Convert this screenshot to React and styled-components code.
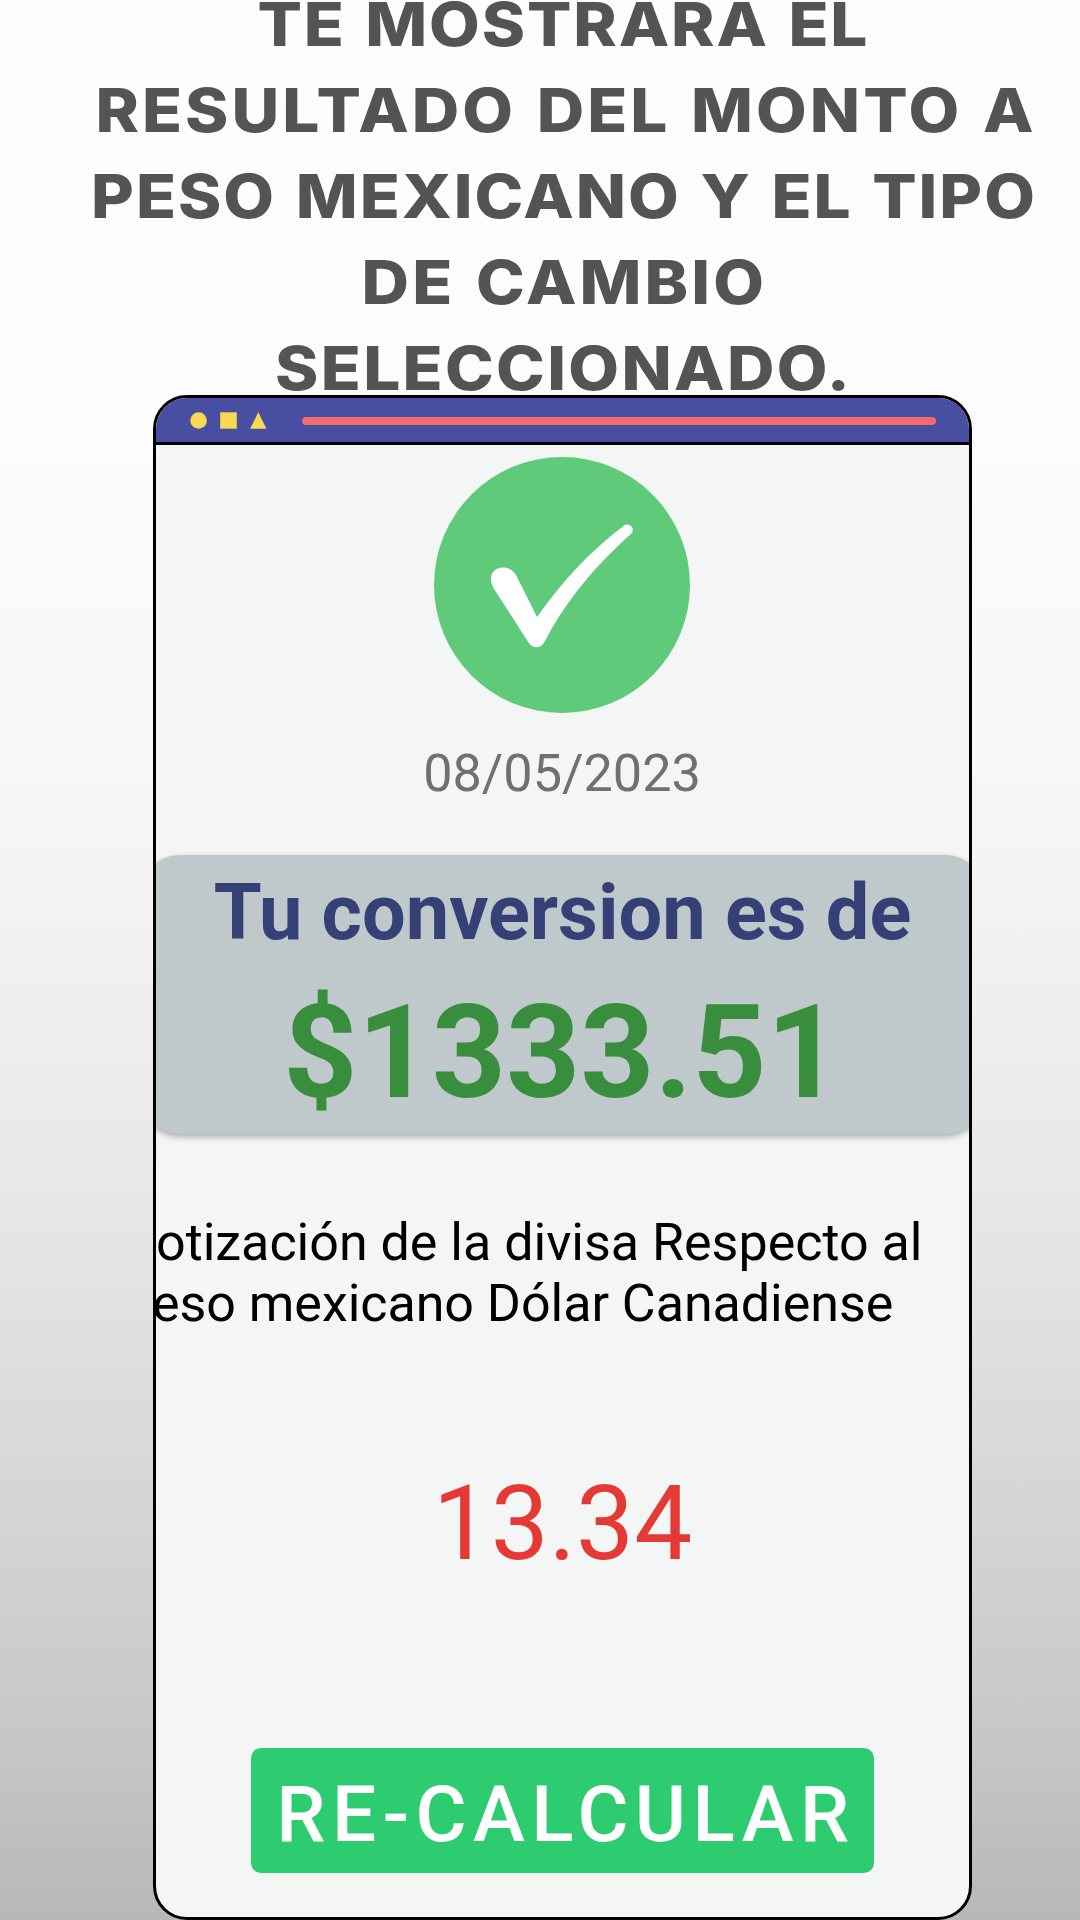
import React from "react";
import styled, { createGlobalStyle } from "styled-components";

const GlobalStyle = createGlobalStyle`
  * { box-sizing: border-box; }
  html, body { margin: 0; padding: 0; }
  body { font-family: Roboto, "Liberation Sans", sans-serif; }
`;

const Page = styled.main`
  width: 1080px;
  height: 1920px;
  overflow: hidden;
  display: flex;
  flex-direction: column;
  align-items: center;
  padding-left: 45px;
  background: linear-gradient(180deg, #fdfdfd 0%, #fcfcfc 22%, #f8f8f8 38%, #f4f4f4 45%, #eaeaea 59%, #e6e6e6 64%, #dfdfdf 70%, #c9c9c9 89%, #b8b8b8 100%);
`;

const Heading = styled.h1`
  margin: 0;
  height: 395px;
  flex: none;
  display: flex;
  flex-direction: column;
  align-items: center;
  gap: 38px;
  font: 800 60px/48px Inter, "Open Sans", sans-serif;
  color: #545454;
`;

const HeadingLine = styled.span`
  display: block;
  height: 48px;
  white-space: nowrap;
  padding-left: ${(p) => p.$inset}px;
  letter-spacing: ${(p) => p.$track}px;
  word-spacing: 3px;
  transform: scaleX(1.095);
`;

const Window = styled.section`
  flex: none;
  width: 819px;
  height: 1525px;
  border: 3px solid #000;
  border-radius: 34px;
  background: #f4f6f5;
  overflow: hidden;
  display: flex;
  flex-direction: column;
`;

const TitleBar = styled.header`
  flex: none;
  height: 47px;
  padding: 1px 33px 0 34px;
  display: flex;
  align-items: center;
  background: #484ea1;
  border-bottom: 3px solid #000;
`;

const Shapes = styled.svg`
  width: 77px;
  height: 17px;
  margin-right: 35px;
  fill: #f8da52;
`;

const AddressLine = styled.div`
  flex: 1;
  height: 8px;
  border-radius: 4px;
  background: #f26c6e;
`;

const Body = styled.div`
  flex: 1;
  display: flex;
  flex-direction: column;
  align-items: center;
`;

const CheckBadge = styled.svg`
  flex: none;
  width: 256px;
  height: 256px;
  margin: 11.500px 1px 0 0;
`;

const DateText = styled.time`
  margin: 31.500px 1px 0 0;
  height: 60px;
  font-size: 52.2px;
  line-height: 60px;
  color: #6f7170;
`;

const ResultCard = styled.div`
  flex: none;
  width: 845px;
  height: 279px;
  margin-top: 51px;
  border-radius: 40px;
  background: #bfc8ca;
  box-shadow: 0 3px 6px rgba(0, 0, 0, 0.3);
  display: flex;
  flex-direction: column;
  align-items: center;
  font-weight: 700;
`;

const ResultLabel = styled.div`
  margin-top: 12px;
  font-size: 77.5px;
  line-height: 92px;
  white-space: nowrap;
  color: #354077;
`;

const Amount = styled.div`
  margin: 18px 1px 0 0;
  font-size: 129.500px;
  line-height: 152px;
  color: #398e3d;
`;

const RateText = styled.p`
  flex: none;
  align-self: flex-start;
  margin: 78px 0 0 0;
  font-size: 52px;
  line-height: 61px;
  white-space: nowrap;
  color: #000;
`;

const RateLine = styled.span`
  display: block;
  margin-left: ${(p) => p.$shift || 0}px;
  letter-spacing: ${(p) => p.$track || 0}px;
`;

const Rate = styled.div`
  margin-top: 129px;
  font-size: 103.3px;
  line-height: 122px;
  color: #e43935;
`;

const Button = styled.button`
  flex: none;
  width: 623px;
  height: 125px;
  margin-top: 163px;
  padding: 6px 0 0 7px;
  border: 0;
  border-radius: 10px;
  background: #2ecc70;
  color: #fff;
  font: 500 78.3px/92px Roboto, sans-serif;
  letter-spacing: 6.35px;
  white-space: nowrap;
`;

const headingLines = [
  { text: "TE MOSTRARA EL", track: 1.7, inset: 1 },
  { text: "RESULTADO DEL MONTO A", track: 2.75, inset: 7 },
  { text: "PESO MEXICANO Y EL TIPO", track: 1.8, inset: 3 },
  { text: "DE CAMBIO", track: 2.8, inset: 4 },
  { text: "SELECCIONADO.", track: 2.1, inset: 3 },
];

export default function App() {
  return (
    <>
      <GlobalStyle />
      <Page>
        <Heading>
          {headingLines.map(({ text, track, inset }) => (
            <HeadingLine key={text} $track={track} $inset={inset}>{text}</HeadingLine>
          ))}
        </Heading>
        <Window>
          <TitleBar>
            <Shapes viewBox="0 0 77 17">
              <circle cx="8.6" cy="8.5" r="8.3" />
              <rect x="30.2" y="0.3" width="16.6" height="16.4" />
              <path d="M68.3.3 76.5 16.7H60.1Z" />
            </Shapes>
            <AddressLine />
          </TitleBar>
          <Body>
            <CheckBadge viewBox="0 0 256 256">
              <circle cx="128" cy="128" r="128" fill="#60ca7b" />
              <path
                fill="#fff"
                d="M59.5 131C54 121 58 113 65 111C72 109 79 112 82.5 119L103 160C126 127 156 94 189.500 69C195 64.500 202 71 197 77C164 106 132 143 110.500 185C107 192 98.500 192 94.500 185.500Z"
              />
            </CheckBadge>
            <DateText>08/05/2023</DateText>
            <ResultCard>
              <ResultLabel>Tu conversion es de</ResultLabel>
              <Amount>$1333.51</Amount>
            </ResultCard>
            <RateText>
              <RateLine>otización de la divisa Respecto al</RateLine>
              <RateLine $shift={-4} $track={-0.04}>eso mexicano Dólar Canadiense</RateLine>
            </RateText>
            <Rate>13.34</Rate>
            <Button>RE-CALCULAR</Button>
          </Body>
        </Window>
      </Page>
    </>
  );
}
